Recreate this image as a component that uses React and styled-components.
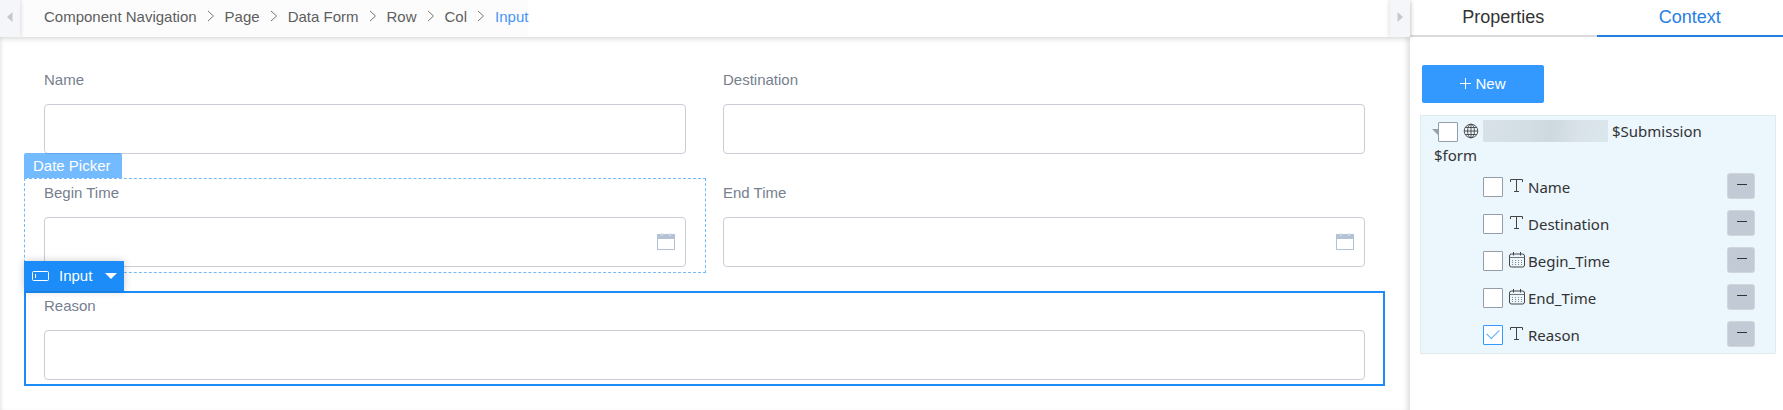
import React, { useState } from 'react';
import styled, { createGlobalStyle, css } from 'styled-components';

const GlobalStyle = createGlobalStyle`
    * {
        box-sizing: border-box;
    }

    body {
        margin: 0;
        background: #fff;
        font-family: "Liberation Sans", Arial, sans-serif;
        font-size: 15px;
        color: #333;
    }

    button, input {
        font: inherit;
    }

    svg {
        flex: none;
    }
`;

const Designer = styled.div`
    display: flex;
    min-height: 100vh;
`;

const Workspace = styled.main`
    flex: 1;
    min-width: 0;
    display: flex;
    flex-direction: column;
`;

const TopBar = styled.header`
    display: flex;
    height: 37px;
    box-shadow: 0 2px 5px rgba(0, 0, 0, 0.14);
    z-index: 1;
`;

const CollapseButton = styled.button`
    display: flex;
    align-items: center;
    justify-content: center;
    width: 20px;
    padding: 0 0 3px;
    border: none;
    background: #f5f6fa;
    box-shadow: 0 0 5px rgba(0, 0, 0, 0.18);
    clip-path: inset(0 -6px 0 -6px);
    cursor: pointer;
`;

const Breadcrumb = styled.nav`
    display: flex;
    align-items: center;
    padding: 0 0 4px 24px;
    background: #fcfcfc;
    margin-right: auto;
`;

const Crumb = styled.a`
    line-height: 18px;
    color: ${(props) => (props.$current ? '#4795f8' : '#5e5e5e')};
    text-decoration: none;
    white-space: nowrap;
`;

const Separator = styled.svg`
    width: 8px;
    height: 12px;
    margin: 0 10px 2px;
`;

const Canvas = styled.form`
    flex: 1;
    display: grid;
    grid-template-columns: 1fr 1fr;
    align-content: start;
    gap: 18px 37px;
    padding: 28px 45px 24px 44px;
    box-shadow: inset 4px 0 3px -2px rgba(0, 0, 0, 0.08), inset -6px 0 5px -3px rgba(0, 0, 0, 0.12);
`;

const Field = styled.div`
    position: relative;
    padding-bottom: 6px;
    ${(props) => props.$wide && css`
        grid-column: 1 / -1;
    `}
`;

const FieldLabel = styled.label`
    display: block;
    height: 39px;
    padding-top: 6px;
    line-height: 17px;
    color: #76808e;
`;

const FieldBox = styled.div`
    display: flex;
    align-items: center;
    height: 50px;
    padding-right: 10px;
    border: 1px solid #cacdd6;
    border-radius: 4px;
    background: #fff;
`;

const TextInput = styled.input`
    flex: 1;
    min-width: 0;
    height: 100%;
    padding: 0 12px;
    border: none;
    outline: none;
    background: transparent;
`;

const IconButton = styled.button`
    display: flex;
    padding: 0;
    border: none;
    background: none;
    cursor: pointer;
`;

// frames drawn over the field that is hovered or selected
const Frame = styled.div`
    position: absolute;
    inset: 0 -20px;
    pointer-events: none;
    border: ${(props) => (props.$selected ? '2px solid #1b8cf8' : '1px dashed #74b9fc')};
`;

const HoverTag = styled.span`
    position: absolute;
    left: -20px;
    bottom: 100%;
    height: 25px;
    padding: 0 11px 0 9px;
    line-height: 25px;
    border-radius: 2px 2px 0 0;
    background: rgba(24, 140, 255, 0.6);
    color: #fff;
`;

const SelectedTag = styled.button`
    position: absolute;
    left: -20px;
    bottom: 100%;
    z-index: 1;
    display: flex;
    align-items: center;
    height: 30px;
    width: 100px;
    padding: 0 7px 0 8px;
    border: none;
    background: #1b8cf8;
    box-shadow: 0 0 8px rgba(0, 0, 0, 0.2);
    color: #fff;

    span {
        flex: 1;
        padding: 0 0 2px 10px;
        text-align: left;
    }
`;

const SidePanel = styled.aside`
    flex: 0 0 373px;
    background: #fff;
`;

const Tabs = styled.div`
    display: flex;
    height: 37px;
`;

const Tab = styled.button`
    flex: 1;
    padding: 0 0 1px;
    border: none;
    border-bottom: 2px solid ${(props) => (props.$active ? '#2580e4' : '#dbdbdb')};
    background: none;
    font-size: 18px;
    color: ${(props) => (props.$active ? '#2580e4' : '#333')};
    cursor: pointer;
`;

const PanelBody = styled.div`
    padding: 28px 7px 0 10px;
`;

const NewButton = styled.button`
    display: flex;
    align-items: center;
    justify-content: center;
    gap: 4px;
    width: 122px;
    height: 38px;
    margin: 0 2px 12px;
    padding: 0 0 2px;
    border: none;
    border-radius: 2px;
    background: #3399ff;
    color: #fff;
    cursor: pointer;
`;

const Tree = styled.div`
    padding: 4px 20px 0 11px;
    border: 1px solid #e1eaef;
    background: #ebf6fd;
    font-family: "Noto Sans", "Open Sans", sans-serif;
`;

const RootRow = styled.div`
    display: flex;
    align-items: center;
    height: 24px;
`;

const RootName = styled.label`
    display: flex;
    align-items: center;
    gap: 4px;
    margin-left: 5px;
    padding-bottom: 2px;
`;

const RootNameEnd = styled.div`
    height: 24px;
    padding-left: 2px;
    line-height: 22px;
`;

const Redacted = styled.span`
    flex: none;
    width: 125px;
    height: 22px;
    background: linear-gradient(100deg, #d8e1e8, #d3dde4 35%, #ced8df 55%, #d9e2e9 75%, #dce6ed);
`;

const Check = styled.input`
    appearance: none;
    display: flex;
    align-items: center;
    justify-content: center;
    flex: none;
    width: 20px;
    height: 20px;
    margin: 0;
    border: 1px solid #939dac;
    border-radius: 1px;
    background: #fff;

    &:checked {
        border-color: #3399ff;
    }

    &:checked::after {
        content: '';
        width: 11px;
        height: 6px;
        margin-bottom: 4px;
        border: solid #5aabff;
        border-width: 0 0 1px 1px;
        transform: rotate(-45deg);
    }
`;

const TreeList = styled.ul`
    margin: 0;
    padding: 0 0 0 51px;
    list-style: none;
`;

const TreeItem = styled.li`
    display: flex;
    align-items: center;
    height: 37px;
`;

const ItemName = styled.label`
    flex: 1;
    display: flex;
    align-items: center;
    gap: 3px;
    padding-left: 6px;

    svg {
        margin-bottom: 2px;
    }
`;

const RemoveButton = styled.button`
    display: flex;
    align-items: center;
    justify-content: center;
    width: 28px;
    height: 26px;
    margin-bottom: 2px;
    padding: 0 0 2px 2px;
    border: 1px solid #d2d5da;
    border-radius: 3px;
    background: #c2cad6;
    cursor: pointer;
`;

function Chevron() {
    return (
        <Separator viewBox="0 0 8 12" aria-hidden="true">
            <path d="M1 1l5.5 5L1 11" fill="none" stroke="#777" />
        </Separator>
    );
}

function Arrow({ left }) {
    return (
        <svg width="6" height="10" viewBox="0 0 6 10" aria-hidden="true">
            <path d={left ? 'M5.500 0v10L0 5z' : 'M.5 0v10L6 5z'} fill="#c8c8c8" />
        </svg>
    );
}

function PickerIcon() {
    return (
        <svg width="18" height="18" viewBox="0 0 18 18" aria-hidden="true">
            <path d="M0 1h18v16H0zM1 6v10h16V6z" fill="#b4c2d5" fillRule="evenodd" />
            <path d="M5 0v3M13 0v3" stroke="#d5deea" strokeWidth="1.500" />
        </svg>
    );
}

function GlobeIcon() {
    return (
        <svg width="16" height="16" viewBox="0 0 16 16" fill="none" stroke="#444" strokeWidth=".9" aria-hidden="true">
            <circle cx="8" cy="8" r="6.800" />
            <ellipse cx="8" cy="8" rx="3.400" ry="6.800" />
            <path d="M8 1.200v13.600M1.200 8h13.600M2.300 4.500h11.400M2.300 11.500h11.400" />
        </svg>
    );
}

function TextIcon() {
    return (
        <svg width="16" height="16" viewBox="0 0 16 16" fill="none" stroke="#444" aria-hidden="true">
            <path d="M1.500 4V1.500h12V4M7.500 1.500v12M5 13.500h5" />
        </svg>
    );
}

function DateIcon() {
    return (
        <svg width="16" height="16" viewBox="0 0 16 16" fill="none" stroke="#444" aria-hidden="true">
            <rect x=".5" y="2" width="15" height="13" rx="2" />
            <path d="M4.500 0v3.500M11.500 0v3.500" />
            <path d="M.5 5.500h15" stroke="#777" />
            <path d="M3 8.500h10M3 10.500h10M3 12.500h10" stroke="#888" strokeDasharray="1 2" />
        </svg>
    );
}

const path = ['Component Navigation', 'Page', 'Data Form', 'Row', 'Col', 'Input'];

const fields = [
    { id: 'name', label: 'Name' },
    { id: 'destination', label: 'Destination' },
    { id: 'begin', label: 'Begin Time', date: true, hovered: true },
    { id: 'end', label: 'End Time', date: true },
    { id: 'reason', label: 'Reason', selected: true, wide: true },
];

const variables = [
    { name: 'Name' },
    { name: 'Destination' },
    { name: 'Begin_Time', date: true },
    { name: 'End_Time', date: true },
    { name: 'Reason' },
];

function FormField({ field }) {
    return (
        <Field $wide={field.wide}>
            <FieldLabel htmlFor={field.id}>{field.label}</FieldLabel>
            <FieldBox>
                <TextInput id={field.id} type="text" />
                {field.date && (
                    <IconButton type="button" aria-label={`Pick ${field.label}`}>
                        <PickerIcon />
                    </IconButton>
                )}
            </FieldBox>
            {(field.hovered || field.selected) && <Frame $selected={field.selected} />}
            {field.hovered && <HoverTag>Date Picker</HoverTag>}
            {field.selected && (
                <SelectedTag type="button">
                    <svg width="17" height="10" viewBox="0 0 17 10" fill="none" stroke="#fff" aria-hidden="true">
                        <rect x=".5" y=".5" width="16" height="9" rx="1" />
                        <path d="M3.500 3v4" />
                    </svg>
                    <span>Input</span>
                    <svg width="12" height="6" viewBox="0 0 12 6" aria-hidden="true">
                        <path d="M0 0h12L6 6z" fill="#fff" />
                    </svg>
                </SelectedTag>
            )}
        </Field>
    );
}

function App() {
    const [tab, setTab] = useState('Context');
    const [checked, setChecked] = useState(['Reason']);

    const toggle = (name) => {
        setChecked(checked.includes(name) ? checked.filter((item) => item !== name) : [...checked, name]);
    };

    return (
        <>
            <GlobalStyle />
            <Designer>
                <Workspace>
                    <TopBar>
                        <CollapseButton aria-label="Collapse left panel"><Arrow left /></CollapseButton>
                        <Breadcrumb aria-label="Component path">
                            {path.map((name, index) => (
                                <React.Fragment key={name}>
                                    {index > 0 && <Chevron />}
                                    <Crumb href="#" $current={index === path.length - 1}>{name}</Crumb>
                                </React.Fragment>
                            ))}
                        </Breadcrumb>
                        <CollapseButton aria-label="Collapse right panel"><Arrow /></CollapseButton>
                    </TopBar>
                    <Canvas>
                        {fields.map((field) => <FormField key={field.id} field={field} />)}
                    </Canvas>
                </Workspace>
                <SidePanel>
                    <Tabs role="tablist">
                        {['Properties', 'Context'].map((name) => (
                            <Tab
                                key={name}
                                role="tab"
                                aria-selected={tab === name}
                                $active={tab === name}
                                onClick={() => setTab(name)}
                            >
                                {name}
                            </Tab>
                        ))}
                    </Tabs>
                    <PanelBody>
                        <NewButton type="button">
                            <svg width="11" height="11" viewBox="0 0 11 11" stroke="#fff" aria-hidden="true">
                                <path d="M5.500 0v11M0 5.500h11" />
                            </svg>
                            New
                        </NewButton>
                        <Tree>
                            <RootRow>
                                <svg width="6" height="6" viewBox="0 0 6 6" aria-hidden="true">
                                    <path d="M0 0h6v6z" fill="#98a0a8" />
                                </svg>
                                <Check
                                    type="checkbox"
                                    id="root-form"
                                    checked={checked.includes('form')}
                                    onChange={() => toggle('form')}
                                />
                                <RootName htmlFor="root-form">
                                    <GlobeIcon />
                                    <Redacted />
                                    $Submission
                                </RootName>
                            </RootRow>
                            <RootNameEnd>$form</RootNameEnd>
                            <TreeList>
                                {variables.map(({ name, date }) => (
                                    <TreeItem key={name}>
                                        <Check
                                            type="checkbox"
                                            id={`var-${name}`}
                                            checked={checked.includes(name)}
                                            onChange={() => toggle(name)}
                                        />
                                        <ItemName htmlFor={`var-${name}`}>
                                            {date ? <DateIcon /> : <TextIcon />}
                                            {name}
                                        </ItemName>
                                        <RemoveButton type="button" aria-label={`Remove ${name}`}>
                                            <svg width="10" height="2" viewBox="0 0 10 2" aria-hidden="true">
                                                <path d="M0 .5h10" stroke="#333" />
                                            </svg>
                                        </RemoveButton>
                                    </TreeItem>
                                ))}
                            </TreeList>
                        </Tree>
                    </PanelBody>
                </SidePanel>
            </Designer>
        </>
    );
}

export default App;
